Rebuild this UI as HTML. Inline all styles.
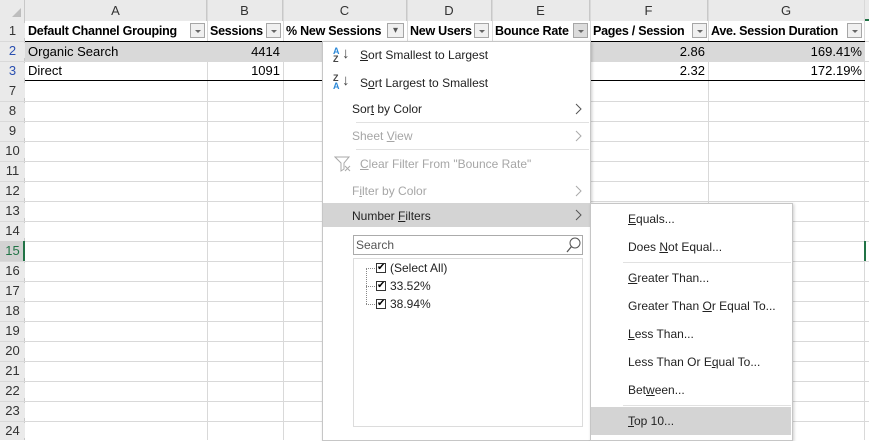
<!DOCTYPE html>
<html><head><style>
*{margin:0;padding:0;box-sizing:border-box}
body{width:869px;height:440px;overflow:hidden;background:#fff;font-family:"Liberation Sans",sans-serif;position:relative}
.a{position:absolute}
.hl{position:absolute;height:1px;background:#d9d9d9;left:0;width:869px}
.vl{position:absolute;width:1px;background:#d9d9d9;top:0;height:440px}
.rh{position:absolute;left:0;width:25px;text-align:center;font-size:13px;color:#333;background:#eaeaea}
.ch{position:absolute;top:0;height:21px;font-size:13px;color:#333;text-align:center;line-height:22px;background:#eaeaea;border-right:1px solid #c8c8c8}
.hd{position:absolute;top:21px;height:20px;font-size:12.5px;font-weight:bold;line-height:20px;color:#000;padding-left:3px;white-space:nowrap;overflow:hidden;letter-spacing:-0.25px}
.dd{position:absolute;top:23px;width:15px;height:15px;border:1px solid #a6a6a6;background:#f0f0f0}
.dd:after{content:"";position:absolute;left:4px;top:6px;border-left:3px solid transparent;border-right:3px solid transparent;border-top:3px solid #666}
.c{position:absolute;font-size:13px;line-height:20px;white-space:nowrap}
.mi{position:absolute;font-size:12px;color:#222;white-space:nowrap}
.dis{color:#a6a6a6}
.arr{position:absolute;left:575px}
u{text-decoration:underline}
</style></head><body>
<div class="a" style="left:0;top:0;width:869px;height:21px;background:#eaeaea;border-bottom:1px solid #bdbdbd"></div>
<div class="a" style="left:0;top:0;width:25px;height:21px;background:#eaeaea;border-right:1px solid #c8c8c8"></div>
<div class="a" style="left:12px;top:8px;width:0;height:0;border-left:9px solid transparent;border-bottom:9px solid #bdbdbd"></div>
<div class="ch" style="left:25px;width:182px">A</div>
<div class="ch" style="left:207px;width:76px">B</div>
<div class="ch" style="left:283px;width:124px">C</div>
<div class="ch" style="left:407px;width:85px">D</div>
<div class="ch" style="left:492px;width:98px">E</div>
<div class="ch" style="left:590px;width:118px">F</div>
<div class="ch" style="left:708px;width:157px">G</div>
<div class="a" style="left:865px;top:19px;width:4px;height:2px;background:#217346"></div>
<div class="a" style="left:0;top:21px;width:25px;height:419px;background:#eaeaea;border-right:1px solid #c8c8c8"></div>
<div class="vl" style="left:207px"></div><div class="vl" style="left:283px"></div><div class="vl" style="left:407px"></div><div class="vl" style="left:492px"></div><div class="vl" style="left:590px"></div><div class="vl" style="left:708px"></div><div class="vl" style="left:864px"></div>
<div class="hl" style="top:41px"></div><div class="hl" style="top:61px"></div>
<div class="hl" style="top:101px"></div><div class="hl" style="top:121px"></div><div class="hl" style="top:141px"></div><div class="hl" style="top:161px"></div><div class="hl" style="top:181px"></div><div class="hl" style="top:201px"></div><div class="hl" style="top:221px"></div><div class="hl" style="top:241px"></div><div class="hl" style="top:261px"></div><div class="hl" style="top:281px"></div><div class="hl" style="top:301px"></div><div class="hl" style="top:321px"></div><div class="hl" style="top:341px"></div><div class="hl" style="top:361px"></div><div class="hl" style="top:381px"></div><div class="hl" style="top:401px"></div><div class="hl" style="top:421px"></div>
<div class="a" style="left:25px;top:42px;width:840px;height:19px;background:#d9d9d9"></div>
<div class="a" style="left:25px;top:80px;width:840px;height:1px;background:#000"></div>
<div class="a" style="left:25px;top:41px;width:840px;height:1px;background:#000"></div>
<div class="rh" style="top:23px">1</div>
<div class="rh" style="top:43px;color:#2a4fb0">2</div>
<div class="rh" style="top:63px;color:#2a4fb0">3</div>
<div class="rh" style="top:83px">7</div><div class="rh" style="top:103px">8</div><div class="rh" style="top:123px">9</div><div class="rh" style="top:143px">10</div><div class="rh" style="top:163px">11</div><div class="rh" style="top:183px">12</div><div class="rh" style="top:203px">13</div><div class="rh" style="top:223px">14</div>
<div class="a" style="left:0;top:241px;width:25px;height:20px;background:#d2d2d2;border-right:2px solid #217346"></div>
<div class="rh" style="top:243px;background:none;color:#217346">15</div>
<div class="rh" style="top:263px">16</div><div class="rh" style="top:283px">17</div><div class="rh" style="top:303px">18</div><div class="rh" style="top:323px">19</div><div class="rh" style="top:343px">20</div><div class="rh" style="top:363px">21</div><div class="rh" style="top:383px">22</div><div class="rh" style="top:403px">23</div><div class="rh" style="top:423px">24</div>
<div class="a" style="left:864px;top:241px;width:2px;height:20px;background:#217346"></div>
<div class="hd" style="left:25px;width:165px">Default Channel Grouping</div><div class="dd" style="left:190px"></div>
<div class="hd" style="left:207px;width:59px">Sessions</div><div class="dd" style="left:266px"></div>
<div class="hd" style="left:283px;width:104px">% New Sessions</div>
<div class="a" style="left:387px;top:23px;width:17px;height:15px;border:1px solid #a6a6a6;background:#f0f0f0;font-size:10px;text-align:center;line-height:13px;color:#555">▾</div>
<div class="hd" style="left:407px;width:67px">New Users</div><div class="dd" style="left:474px"></div>
<div class="hd" style="left:492px;width:81px">Bounce Rate</div><div class="dd" style="left:573px;background:#dcdcdc"></div>
<div class="hd" style="left:590px;width:102px">Pages / Session</div><div class="dd" style="left:692px"></div>
<div class="hd" style="left:708px;width:139px">Ave. Session Duration</div><div class="dd" style="left:847px"></div>
<div class="c" style="left:28px;top:42px">Organic Search</div>
<div class="c" style="left:207px;top:42px;width:73px;text-align:right">4414</div>
<div class="c" style="left:28px;top:61px">Direct</div>
<div class="c" style="left:207px;top:61px;width:73px;text-align:right">1091</div>
<div class="c" style="left:590px;top:42px;width:115px;text-align:right">2.86</div>
<div class="c" style="left:590px;top:61px;width:115px;text-align:right">2.32</div>
<div class="c" style="left:708px;top:42px;width:154px;text-align:right">169.41%</div>
<div class="c" style="left:708px;top:61px;width:154px;text-align:right">172.19%</div>
<!-- menu -->
<div class="a" style="left:322px;top:41px;width:269px;height:400px;background:#fff;border:1px solid #c6c6c6;box-shadow:1px 1px 3px rgba(0,0,0,.2)"></div>
<div class="a" style="left:333px;top:47px;font-size:9px;line-height:8px;color:#2b88d8;font-weight:bold">A<br><span style="color:#444">Z</span></div><div class="a" style="left:342px;top:45px;font-size:15px;color:#444">↓</div>
<div class="mi" style="left:360px;top:48px"><u>S</u>ort Smallest to Largest</div>
<div class="a" style="left:333px;top:74px;font-size:9px;line-height:8px;color:#444;font-weight:bold">Z<br><span style="color:#2b88d8">A</span></div><div class="a" style="left:342px;top:72px;font-size:15px;color:#444">↓</div>
<div class="mi" style="left:360px;top:76px">S<u>o</u>rt Largest to Smallest</div>
<div class="mi" style="left:352px;top:102px">Sor<u>t</u> by Color</div>
<svg class="arr" style="top:103px" width="8" height="12"><path d="M1 1l5 5-5 5" fill="none" stroke="#555"/></svg>
<div class="a" style="left:356px;top:122px;width:233px;height:1px;background:#e1e1e1"></div>
<div class="mi dis" style="left:352px;top:129px">Sheet <u>V</u>iew</div>
<svg class="arr" style="top:130px" width="8" height="12"><path d="M1 1l5 5-5 5" fill="none" stroke="#aaa"/></svg>
<div class="a" style="left:356px;top:149px;width:233px;height:1px;background:#e1e1e1"></div>
<svg class="a" style="left:334px;top:155px" width="18" height="18"><path d="M1 2h14l-5 6v6l-3 2v-8z" fill="none" stroke="#aaa"/><path d="M11 11l5 5M16 11l-5 5" stroke="#aaa"/></svg>
<div class="mi dis" style="left:360px;top:157px"><u>C</u>lear Filter From "Bounce Rate"</div>
<div class="mi dis" style="left:352px;top:184px">F<u>i</u>lter by Color</div>
<svg class="arr" style="top:185px" width="8" height="12"><path d="M1 1l5 5-5 5" fill="none" stroke="#aaa"/></svg>
<div class="a" style="left:323px;top:203px;width:267px;height:24px;background:#d4d4d4"></div>
<div class="mi" style="left:352px;top:209px">Number <u>F</u>ilters</div>
<svg class="arr" style="top:209px" width="8" height="12"><path d="M1 1l5 5-5 5" fill="none" stroke="#555"/></svg>
<div class="a" style="left:353px;top:235px;width:230px;height:20px;border:1px solid #ababab"></div>
<div class="mi" style="left:356px;top:238px;color:#555">Search</div>
<svg class="a" style="left:565px;top:236px" width="18" height="18"><circle cx="10" cy="7" r="5" fill="none" stroke="#555"/><path d="M6.5 10.5L2 16" stroke="#555" stroke-width="1.3"/></svg>
<div class="a" style="left:353px;top:258px;width:230px;height:169px;border:1px solid #dcdcdc"></div>
<div class="a" style="left:366px;top:268px;width:1px;height:36px;border-left:1px dotted #888"></div>
<div class="a" style="left:366px;top:268px;width:9px;border-top:1px dotted #888"></div>
<div class="a" style="left:366px;top:286px;width:9px;border-top:1px dotted #888"></div>
<div class="a" style="left:366px;top:304px;width:9px;border-top:1px dotted #888"></div>
<div class="a" style="left:376px;top:263px;width:10px;height:10px;border:1px solid #333;font-size:10px;line-height:8px;text-align:center">✔</div>
<div class="a" style="left:376px;top:281px;width:10px;height:10px;border:1px solid #333;font-size:10px;line-height:8px;text-align:center">✔</div>
<div class="a" style="left:376px;top:299px;width:10px;height:10px;border:1px solid #333;font-size:10px;line-height:8px;text-align:center">✔</div>
<div class="mi" style="left:390px;top:261px">(Select All)</div>
<div class="mi" style="left:390px;top:279px">33.52%</div>
<div class="mi" style="left:390px;top:297px">38.94%</div>
<!-- submenu -->
<div class="a" style="left:590px;top:203px;width:203px;height:238px;background:#fff;border:1px solid #c6c6c6;box-shadow:1px 1px 3px rgba(0,0,0,.2)"></div>
<div class="mi" style="left:628px;top:212px"><u>E</u>quals...</div>
<div class="mi" style="left:628px;top:240px">Does <u>N</u>ot Equal...</div>
<div class="a" style="left:623px;top:262px;width:168px;height:1px;background:#e1e1e1"></div>
<div class="mi" style="left:628px;top:271px"><u>G</u>reater Than...</div>
<div class="mi" style="left:628px;top:299px">Greater Than <u>O</u>r Equal To...</div>
<div class="mi" style="left:628px;top:327px"><u>L</u>ess Than...</div>
<div class="mi" style="left:628px;top:355px">Less Than Or E<u>q</u>ual To...</div>
<div class="mi" style="left:628px;top:383px">Bet<u>w</u>een...</div>
<div class="a" style="left:623px;top:405px;width:168px;height:1px;background:#e1e1e1"></div>
<div class="a" style="left:591px;top:407px;width:200px;height:28px;background:#d4d4d4"></div>
<div class="mi" style="left:628px;top:414px"><u>T</u>op 10...</div>
</body></html>
